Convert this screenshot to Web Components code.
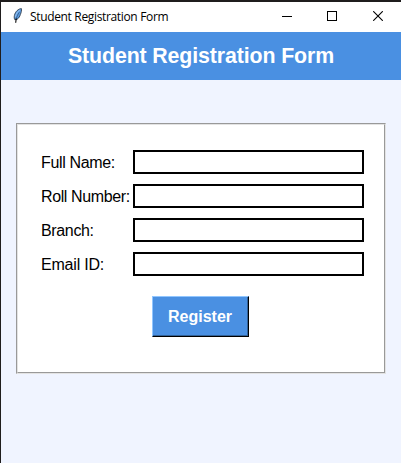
<!DOCTYPE html>
<html lang="en">
<head>
<meta charset="utf-8">
<title>Student Registration Form</title>
<style>
  html, body { margin: 0; height: 100%; overflow: hidden; background: #1f1d1d; }
  body { font-family: "Liberation Sans", Arial, sans-serif; color: #000; }
</style>
</head>
<body>
<app-window></app-window>
<script>
const define = (name, markup) => {
  const template = document.createElement('template');
  template.innerHTML = markup;
  customElements.define(name, class extends HTMLElement {
    constructor() {
      super();
      this.attachShadow({ mode: 'open' }).append(template.content.cloneNode(true));
    }
  });
};

define('feather-icon', `
  <style>:host { display: block; width: 10px; height: 16px; margin-bottom: 2px; } svg { display: block; }</style>
  <svg width="10" height="16" viewBox="0 0 10 16">
    <path d="M9.400 .6 C6.600 .6 3.200 3.500 2.400 7.500 C2 9.300 2.200 10.600 2.800 11.700 L5 11.400 C6.900 10 8 8.200 8.400 6.400 C9.300 4.500 9.800 2.200 9.400 .6Z" fill="#5b9be0" stroke="#27313c" stroke-width=".8"/>
    <path d="M7.900 2 C5.600 3.500 4.100 5.700 3.500 8.800" fill="none" stroke="#a4caf2" stroke-width=".9"/>
    <path d="M7.300 4.300 C5.800 6.500 4.700 8.700 4.200 11" fill="none" stroke="#24415f" stroke-width=".6"/>
    <path d="M4.200 10.500 L3.700 14.800" fill="none" stroke="#000" stroke-width="1.100"/>
  </svg>`);

define('title-bar', `
  <style>
    :host { display: flex; align-items: center; height: 30px; background: #fff; padding-left: 11px; box-sizing: border-box; }
    .caption { flex: 1; margin-left: 8px; font: 12px/16px "Open Sans", "Noto Sans", sans-serif; letter-spacing: -0.34px; white-space: nowrap; }
    .controls { display: flex; gap: 35px; margin: 0 18px 2px 0; }
    .close { margin-left: 1px; }
    svg { display: block; }
  </style>
  <feather-icon></feather-icon>
  <span class="caption"><slot></slot></span>
  <div class="controls">
    <svg width="10" height="10" shape-rendering="crispEdges"><path d="M0 5.500H10" stroke="#000"/></svg>
    <svg width="10" height="10" shape-rendering="crispEdges"><rect x=".5" y=".5" width="9" height="9" fill="none" stroke="#000"/></svg>
    <svg class="close" width="10" height="10"><path d="M.2 .2L9.800 9.800M9.800 .2L.2 9.800" stroke="#000" stroke-width="1.100"/></svg>
  </div>`);

define('form-heading', `
  <style>
    :host { display: flex; align-items: center; justify-content: center; height: 48px; background: #4a90e2; color: #fff;
            font-weight: bold; font-size: 21.33px; line-height: 24px; letter-spacing: -0.12px; white-space: nowrap; }
  </style>
  <slot></slot>`);

define('form-field', `
  <style>
    :host { display: flex; align-items: center; height: 24px; }
    label { width: 92px; flex: none; padding-top: 2px; font-size: 16px; line-height: 18px; white-space: nowrap; letter-spacing: var(--track, 0); }
    input { flex: 1; min-width: 0; height: 24px; box-sizing: border-box; margin: 0; padding: 0 2px; border: 2px solid #000;
            border-radius: 0; background: #fff; outline: none; font: 16px "Liberation Sans", Arial, sans-serif; }
  </style>
  <label for="entry"><slot></slot></label><input id="entry" type="text">`);

define('push-button', `
  <style>
    :host { display: block; width: 97px; height: 41px; }
    button { display: block; width: 100%; height: 100%; box-sizing: border-box; margin: 0; padding: 0 1px 0 0; border-radius: 0;
             border: 1px solid; border-color: #91c6ff #000 #000 #91c6ff; box-shadow: inset -1px -1px #326299;
             background: #4a90e2; color: #fff; font: bold 16px/18px "Liberation Sans", Arial, sans-serif; }
  </style>
  <button type="button"><slot></slot></button>`);

define('group-frame', `
  <style>
    :host { display: block; box-sizing: border-box; width: 370px; height: 251px;
            border: 1px solid; border-color: #999 #e3e3e3 #e3e3e3 #999; background: #fff; }
    .inner { box-sizing: border-box; height: 100%; padding: 25px 20px 0 23px; display: flex; flex-direction: column; gap: 10px;
             border: 1px solid; border-color: #e3e3e3 #999 #999 #e3e3e3; }
    ::slotted(push-button) { align-self: flex-start; margin: 10px 0 0 111px; }
  </style>
  <div class="inner"><slot></slot></div>`);

define('app-window', `
  <style>
    :host { display: flex; flex-direction: column; box-sizing: border-box; height: 463px; width: 401px;
            border: solid #1f1d1d; border-width: 2px 0 0 1px; background: #f0f4ff; }
    group-frame { margin: 43px 0 0 15px; }
  </style>
  <title-bar>Student Registration Form</title-bar>
  <form-heading>Student Registration Form</form-heading>
  <group-frame>
    <form-field style="--track:-0.35px">Full Name:</form-field>
    <form-field style="--track:-0.38px">Roll Number:</form-field>
    <form-field style="--track:-0.35px">Branch:</form-field>
    <form-field style="--track:-0.2px">Email ID:</form-field>
    <push-button>Register</push-button>
  </group-frame>`);
</script>
</body>
</html>
